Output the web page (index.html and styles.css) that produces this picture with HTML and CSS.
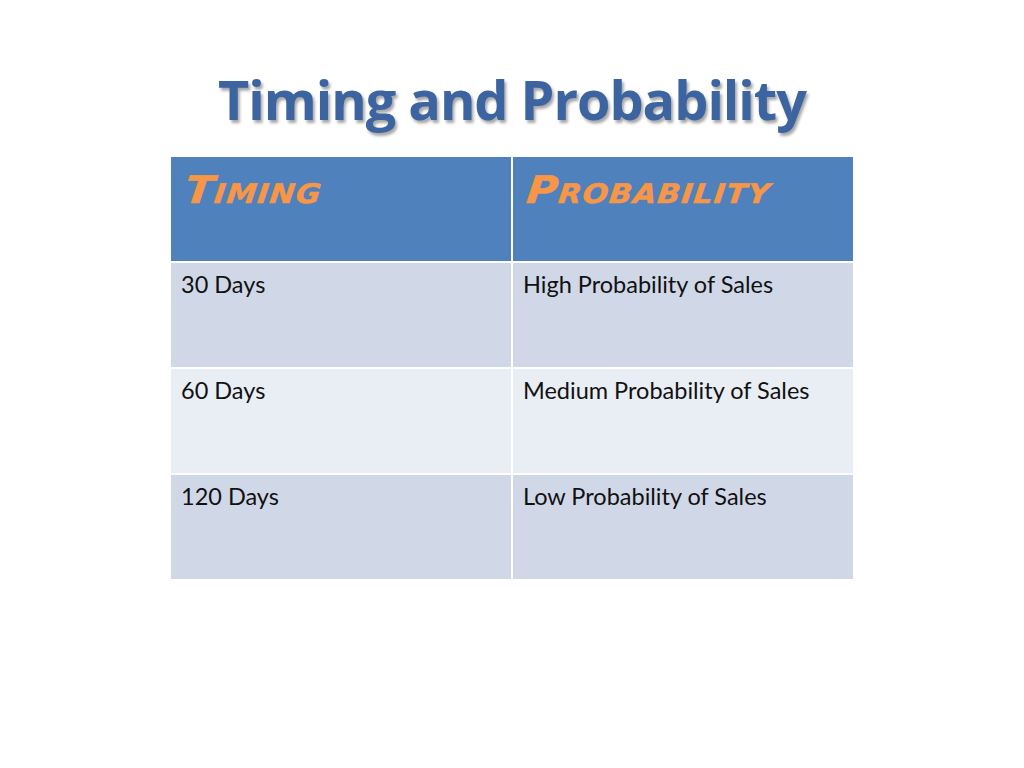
FILE: index.html
```html
<!DOCTYPE html>
<html>
<head>
<meta charset="utf-8">
<link rel="stylesheet" href="styles.css">
</head>
<body>
<div class="slide">
  <h1 class="title">Timing and Probability</h1>
  <div class="table">
    <div class="cell head"><span class="head-text">Timing</span></div>
    <div class="cell head"><span class="head-text">Probability</span></div>
    <div class="cell odd">30 Days</div>
    <div class="cell odd">High Probability of Sales</div>
    <div class="cell even">60 Days</div>
    <div class="cell even">Medium Probability of Sales</div>
    <div class="cell odd">120 Days</div>
    <div class="cell odd">Low Probability of Sales</div>
  </div>
</div>
</body>
</html>
```
FILE: styles.css
```css
html, body {
  margin: 0;
  padding: 0;
  background: #ffffff;
}
.slide {
  width: 1024px;
  height: 768px;
  display: flex;
  flex-direction: column;
  align-items: center;
}
.title {
  margin: 66px 0 0 0;
  height: 91px;
  font-family: "Open Sans", "Liberation Sans", sans-serif;
  font-weight: 700;
  font-size: 54px;
  line-height: 66px;
  color: #3b64a0;
  letter-spacing: -1px;
  text-shadow: 2px 3px 3px rgba(0, 0, 0, 0.35);
}
.table {
  width: 682px;
  display: grid;
  grid-template-columns: 340px 340px;
  grid-template-rows: 104px 104px 104px 104px;
  gap: 2px;
}
.cell {
  padding: 6px 10px;
  font-family: "Lato", "Liberation Sans", sans-serif;
  font-size: 23.5px;
  line-height: 30px;
  color: #111111;
}
.head {
  background: #4f81bd;
  padding: 11px 14px;
}
.head-text {
  display: inline-block;
  color: #f79646;
  font-family: "DejaVu Sans", sans-serif;
  font-weight: 700;
  font-style: italic;
  font-variant: small-caps;
  font-size: 38px;
  line-height: 44px;
  letter-spacing: 1px;
  -webkit-text-stroke: 0.5px #f79646;
  transform-origin: left center;
  transform: scaleX(1.11) skewX(-6deg);
}
.odd {
  background: #d0d8e8;
}
.even {
  background: #e9edf4;
}
```
